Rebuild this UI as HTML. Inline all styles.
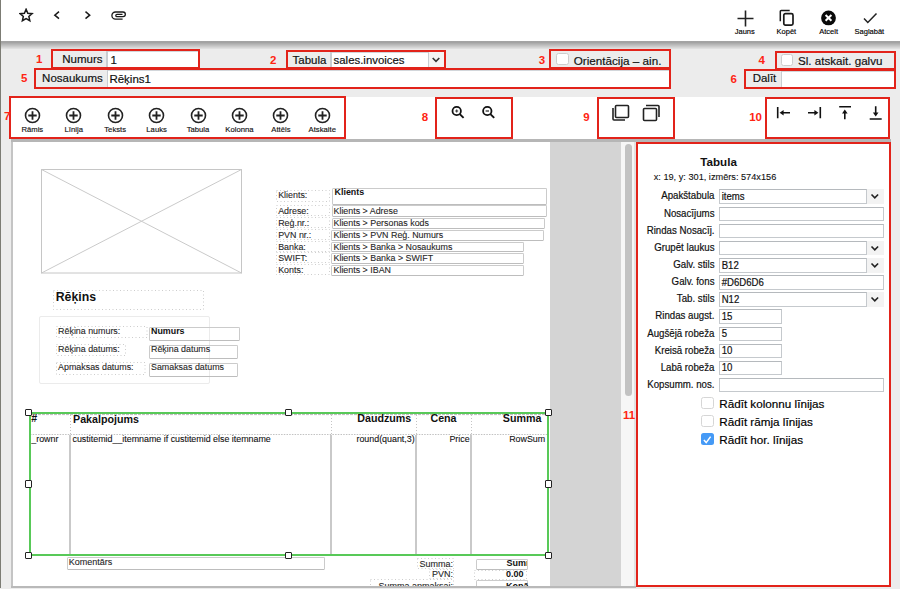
<!DOCTYPE html>
<html><head><meta charset="utf-8"><style>
html,body{margin:0;padding:0;}
body{width:900px;height:589px;overflow:hidden;position:relative;font-family:"Liberation Sans", sans-serif;background:#ececec}
body>div,body>svg{position:absolute}
body>div>div{position:absolute}
</style></head><body>
<div style="left:0px;top:0px;width:900px;height:589px;background:#ececec"></div>
<div style="left:1px;top:0px;width:899px;height:41px;background:#fff"></div>
<div style="left:1px;top:41px;width:899px;height:8px;background:linear-gradient(#a6a6a6 0%,#a0a0a0 15%,#d8d8d8 85%,#e4e4e4 100%)"></div>
<div style="left:0px;top:0px;width:1px;height:589px;background:#7c7c74"></div>
<svg style="position:absolute;left:19px;top:8px;" width="15" height="15" viewBox="0 0 15 15"><polygon points="7.10,1.30 8.80,5.25 13.09,5.65 9.86,8.50 10.80,12.70 7.10,10.50 3.40,12.70 4.34,8.50 1.11,5.65 5.40,5.25" fill="none" stroke="#1a1a1a" stroke-width="1.5" stroke-linejoin="miter"/></svg>
<svg style="position:absolute;left:52px;top:10px;" width="10" height="11" viewBox="0 0 10 11"><polyline points="7,1.7 2.8,5.2 7,8.7" fill="none" stroke="#1a1a1a" stroke-width="1.5"/></svg>
<svg style="position:absolute;left:83px;top:10px;" width="10" height="11" viewBox="0 0 10 11"><polyline points="2.5,1.7 6.7,5.2 2.5,8.7" fill="none" stroke="#1a1a1a" stroke-width="1.5"/></svg>
<svg style="position:absolute;left:110.7px;top:10px;" width="17" height="11" viewBox="0 0 17 11"><path d="M11.6,9.2 H4.5 A3.6,3.6 0 0 1 4.5,2 H12 A2.35,2.35 0 0 1 12,6.7 H6 A1.2,1.2 0 0 1 6,4.3 H11.5" fill="none" stroke="#1a1a1a" stroke-width="1.3"/></svg>
<svg style="position:absolute;left:736px;top:9px;" width="19" height="19" viewBox="0 0 19 19"><path d="M9.5,1.5 V17.5 M1.5,9.5 H17.5" stroke="#222" stroke-width="1.6" fill="none"/></svg>
<svg style="position:absolute;left:778px;top:8px;" width="18" height="19" viewBox="0 0 18 19"><path d="M2.3,13.3 V3.5 A1,1 0 0 1 3.3,2.5 H11.7" stroke="#1a1a1a" stroke-width="1.5" fill="none"/><rect x="5.8" y="5.7" width="9.2" height="11.4" rx="1.6" stroke="#1a1a1a" stroke-width="1.7" fill="none"/></svg>
<svg style="position:absolute;left:820px;top:10px;" width="17" height="17" viewBox="0 0 17 17"><circle cx="8.5" cy="7.9" r="7.4" fill="#0a0a0a"/><path d="M5.6,5.0 L11.4,10.8 M11.4,5.0 L5.6,10.8" stroke="#fff" stroke-width="2"/></svg>
<svg style="position:absolute;left:862px;top:11px;" width="16" height="14" viewBox="0 0 16 14"><polyline points="2,7.5 5.8,11.5 14.5,2.5" fill="none" stroke="#222" stroke-width="1.5"/></svg>
<div style="left:444.79999999999995px;width:600px;text-align:center;top:28.45px;font-size:7.5px;line-height:7.5px;font-weight:normal;color:#000;white-space:nowrap;-webkit-text-stroke:0.14px #000;">Jauns</div>
<div style="left:486.4px;width:600px;text-align:center;top:28.45px;font-size:7.5px;line-height:7.5px;font-weight:normal;color:#000;white-space:nowrap;-webkit-text-stroke:0.14px #000;">Kopēt</div>
<div style="left:528.6px;width:600px;text-align:center;top:28.45px;font-size:7.5px;line-height:7.5px;font-weight:normal;color:#000;white-space:nowrap;-webkit-text-stroke:0.14px #000;">Atcelt</div>
<div style="left:569.4px;width:600px;text-align:center;top:28.45px;font-size:7.5px;line-height:7.5px;font-weight:normal;color:#000;white-space:nowrap;-webkit-text-stroke:0.14px #000;">Saglabāt</div>
<div style="left:53.1px;top:50.9px;width:53.1px;height:16.5px;background:#ececec"></div>
<div style="left:106.2px;top:50.9px;width:1.5px;height:16.5px;background:#c9cdd1"></div>
<div style="left:107.7px;top:50.9px;width:90.0px;height:16.5px;background:#fff;border-top:1.5px solid #d2d6da;box-sizing:border-box"></div>
<div style="right:797.5px;top:54.27px;font-size:11.5px;line-height:11.5px;font-weight:normal;color:#111;white-space:nowrap;-webkit-text-stroke:0.18px #111;">Numurs</div>
<div style="left:110.5px;top:55.07px;font-size:11.5px;line-height:11.5px;font-weight:normal;color:#111;white-space:nowrap;-webkit-text-stroke:0.18px #111;">1</div>
<div style="left:51.1px;top:48.9px;width:148.6px;height:20.5px;border:2px solid #e2231a;box-sizing:border-box;"></div>
<div style="left:36px;top:70.3px;width:70.5px;height:17px;background:#ececec"></div>
<div style="left:106.5px;top:70.3px;width:1.5px;height:17px;background:#c9cdd1"></div>
<div style="left:108.0px;top:70.3px;width:561.0px;height:17px;background:#fff;border-top:1.5px solid #d2d6da;box-sizing:border-box"></div>
<div style="right:797.2px;top:72.87px;font-size:11.5px;line-height:11.5px;font-weight:normal;color:#111;white-space:nowrap;-webkit-text-stroke:0.18px #111;">Nosaukums</div>
<div style="left:109.4px;top:74.07px;font-size:11.5px;line-height:11.5px;font-weight:normal;color:#111;white-space:nowrap;-webkit-text-stroke:0.18px #111;">Rēķins1</div>
<div style="left:34px;top:68.3px;width:637px;height:21px;border:2px solid #e2231a;box-sizing:border-box;"></div>
<div style="left:287.7px;top:51.8px;width:42.3px;height:15.5px;background:#ececec"></div>
<div style="left:330.0px;top:51.8px;width:1.5px;height:15.5px;background:#c9cdd1"></div>
<div style="left:331.5px;top:51.8px;width:112.8px;height:15.5px;background:#fff;border-top:1.5px solid #d2d6da;box-sizing:border-box"></div>
<div style="left:427.6px;top:51.8px;width:16.7px;height:15.5px;background:#f4f4f4;border-left:1px solid #c9cdd1;box-sizing:border-box"></div>
<svg style="position:absolute;left:431px;top:55.5px;" width="10" height="8" viewBox="0 0 10 8"><polyline points="1.7,2 5,5.3 8.3,2" fill="none" stroke="#333" stroke-width="1.6"/></svg>
<div style="right:573.6px;top:54.67px;font-size:11.5px;line-height:11.5px;font-weight:normal;color:#111;white-space:nowrap;-webkit-text-stroke:0.18px #111;">Tabula</div>
<div style="left:333.6px;top:54.95px;font-size:11.4px;line-height:11.4px;font-weight:normal;color:#111;white-space:nowrap;-webkit-text-stroke:0.18px #111;">sales.invoices</div>
<div style="left:285.7px;top:49.8px;width:160.6px;height:19.5px;border:2px solid #e2231a;box-sizing:border-box;"></div>
<div style="left:556.4px;top:53.2px;width:12.2px;height:12.2px;background:#fff;border:1.2px solid #cdcdcd;border-radius:2.5px;box-sizing:border-box"></div>
<div style="left:573.7px;top:54.90px;font-size:11.7px;line-height:11.7px;font-weight:normal;color:#111;white-space:nowrap;-webkit-text-stroke:0.18px #111;">Orientācija – ain.</div>
<div style="left:549.1px;top:49.1px;width:121.7px;height:20px;border:2px solid #e2231a;box-sizing:border-box;"></div>
<div style="left:781.2px;top:53.5px;width:12.2px;height:12.2px;background:#fff;border:1.2px solid #cdcdcd;border-radius:2.5px;box-sizing:border-box"></div>
<div style="left:798px;top:54.78px;font-size:11.6px;line-height:11.6px;font-weight:normal;color:#111;white-space:nowrap;-webkit-text-stroke:0.18px #111;">Sl. atskait. galvu</div>
<div style="left:774.7px;top:50.7px;width:121.6px;height:19.1px;border:2px solid #e2231a;box-sizing:border-box;"></div>
<div style="left:746.3px;top:71.4px;width:34.3px;height:15.8px;background:#ececec"></div>
<div style="left:780.5999999999999px;top:71.4px;width:1.5px;height:15.8px;background:#c9cdd1"></div>
<div style="left:782.0999999999999px;top:71.4px;width:112.2px;height:15.8px;background:#fff;border-top:1.5px solid #d2d6da;box-sizing:border-box"></div>
<div style="right:123.70000000000005px;top:73.37px;font-size:11.5px;line-height:11.5px;font-weight:normal;color:#111;white-space:nowrap;-webkit-text-stroke:0.18px #111;">Dalīt</div>
<div style="left:744.3px;top:69.4px;width:152px;height:19.8px;border:2px solid #e2231a;box-sizing:border-box;"></div>
<div style="left:11px;top:97px;width:879px;height:42px;background:#fff"></div>
<div style="left:11px;top:139px;width:880px;height:3px;background:#b6b6b6"></div>
<svg style="position:absolute;left:23.799999999999997px;top:107px;" width="17" height="17" viewBox="0 0 17 17"><circle cx="8.5" cy="8.5" r="7" fill="none" stroke="#222" stroke-width="1.6"/><path d="M8.5,4.3 V12.7 M4.3,8.5 H12.7" stroke="#222" stroke-width="1.8"/></svg>
<div style="left:-267.7px;width:600px;text-align:center;top:125.88px;font-size:7.7px;line-height:7.7px;font-weight:normal;color:#111;white-space:nowrap;-webkit-text-stroke:0.14px #111;">Rāmis</div>
<svg style="position:absolute;left:65.22999999999999px;top:107px;" width="17" height="17" viewBox="0 0 17 17"><circle cx="8.5" cy="8.5" r="7" fill="none" stroke="#222" stroke-width="1.6"/><path d="M8.5,4.3 V12.7 M4.3,8.5 H12.7" stroke="#222" stroke-width="1.8"/></svg>
<div style="left:-226.27px;width:600px;text-align:center;top:125.88px;font-size:7.7px;line-height:7.7px;font-weight:normal;color:#111;white-space:nowrap;-webkit-text-stroke:0.14px #111;">Līnija</div>
<svg style="position:absolute;left:106.66px;top:107px;" width="17" height="17" viewBox="0 0 17 17"><circle cx="8.5" cy="8.5" r="7" fill="none" stroke="#222" stroke-width="1.6"/><path d="M8.5,4.3 V12.7 M4.3,8.5 H12.7" stroke="#222" stroke-width="1.8"/></svg>
<div style="left:-184.84px;width:600px;text-align:center;top:125.88px;font-size:7.7px;line-height:7.7px;font-weight:normal;color:#111;white-space:nowrap;-webkit-text-stroke:0.14px #111;">Teksts</div>
<svg style="position:absolute;left:148.08999999999997px;top:107px;" width="17" height="17" viewBox="0 0 17 17"><circle cx="8.5" cy="8.5" r="7" fill="none" stroke="#222" stroke-width="1.6"/><path d="M8.5,4.3 V12.7 M4.3,8.5 H12.7" stroke="#222" stroke-width="1.8"/></svg>
<div style="left:-143.41000000000003px;width:600px;text-align:center;top:125.88px;font-size:7.7px;line-height:7.7px;font-weight:normal;color:#111;white-space:nowrap;-webkit-text-stroke:0.14px #111;">Lauks</div>
<svg style="position:absolute;left:189.51999999999998px;top:107px;" width="17" height="17" viewBox="0 0 17 17"><circle cx="8.5" cy="8.5" r="7" fill="none" stroke="#222" stroke-width="1.6"/><path d="M8.5,4.3 V12.7 M4.3,8.5 H12.7" stroke="#222" stroke-width="1.8"/></svg>
<div style="left:-101.98000000000002px;width:600px;text-align:center;top:125.88px;font-size:7.7px;line-height:7.7px;font-weight:normal;color:#111;white-space:nowrap;-webkit-text-stroke:0.14px #111;">Tabula</div>
<svg style="position:absolute;left:230.95px;top:107px;" width="17" height="17" viewBox="0 0 17 17"><circle cx="8.5" cy="8.5" r="7" fill="none" stroke="#222" stroke-width="1.6"/><path d="M8.5,4.3 V12.7 M4.3,8.5 H12.7" stroke="#222" stroke-width="1.8"/></svg>
<div style="left:-60.55000000000001px;width:600px;text-align:center;top:125.88px;font-size:7.7px;line-height:7.7px;font-weight:normal;color:#111;white-space:nowrap;-webkit-text-stroke:0.14px #111;">Kolonna</div>
<svg style="position:absolute;left:272.38px;top:107px;" width="17" height="17" viewBox="0 0 17 17"><circle cx="8.5" cy="8.5" r="7" fill="none" stroke="#222" stroke-width="1.6"/><path d="M8.5,4.3 V12.7 M4.3,8.5 H12.7" stroke="#222" stroke-width="1.8"/></svg>
<div style="left:-19.120000000000005px;width:600px;text-align:center;top:125.88px;font-size:7.7px;line-height:7.7px;font-weight:normal;color:#111;white-space:nowrap;-webkit-text-stroke:0.14px #111;">Attēls</div>
<svg style="position:absolute;left:313.81px;top:107px;" width="17" height="17" viewBox="0 0 17 17"><circle cx="8.5" cy="8.5" r="7" fill="none" stroke="#222" stroke-width="1.6"/><path d="M8.5,4.3 V12.7 M4.3,8.5 H12.7" stroke="#222" stroke-width="1.8"/></svg>
<div style="left:22.310000000000002px;width:600px;text-align:center;top:125.88px;font-size:7.7px;line-height:7.7px;font-weight:normal;color:#111;white-space:nowrap;-webkit-text-stroke:0.14px #111;">Atskaite</div>
<div style="left:9px;top:96px;width:337px;height:43px;border:2px solid #e2231a;box-sizing:border-box;"></div>
<svg style="position:absolute;left:450px;top:105px;" width="16" height="16" viewBox="0 0 16 16"><circle cx="6.7" cy="6" r="4.2" fill="none" stroke="#111" stroke-width="1.8"/><path d="M9.8,9.1 L13.6,12.9" stroke="#111" stroke-width="1.9"/><path d="M6.7,4.5 V7.5 M5.2,6 H8.2" stroke="#333" stroke-width="1.1"/></svg>
<svg style="position:absolute;left:481px;top:105px;" width="16" height="16" viewBox="0 0 16 16"><circle cx="6.3" cy="6" r="4.2" fill="none" stroke="#111" stroke-width="1.8"/><path d="M9.4,9.1 L13.2,12.9" stroke="#111" stroke-width="1.9"/><path d="M4.6,6 H8" stroke="#333" stroke-width="1.3"/></svg>
<div style="left:435.3px;top:97px;width:77.7px;height:42px;border:2px solid #e2231a;box-sizing:border-box;"></div>
<svg style="position:absolute;left:611px;top:103px;" width="20" height="20" viewBox="0 0 20 20"><rect x="4.5" y="2.5" width="13" height="12" rx="1" fill="none" stroke="#222" stroke-width="1.6"/><path d="M2,5 V16 A1,1 0 0 0 3,17 H14" fill="none" stroke="#222" stroke-width="1.6"/></svg>
<svg style="position:absolute;left:641px;top:103px;" width="20" height="20" viewBox="0 0 20 20"><rect x="2.5" y="5.5" width="13" height="12" rx="1" fill="none" stroke="#222" stroke-width="1.6"/><path d="M5,2.5 H17 A1,1 0 0 1 18,3.5 V14" fill="none" stroke="#222" stroke-width="1.6"/></svg>
<div style="left:596.8px;top:96.5px;width:77.9px;height:42.4px;border:2px solid #e2231a;box-sizing:border-box;"></div>
<svg style="position:absolute;left:775px;top:105px;" width="18" height="16" viewBox="0 0 18 16"><path d="M2.7,2 V13.3 M7,7.7 H15" stroke="#111" stroke-width="1.6" fill="none"/><polygon points="4.6,7.7 8.6,4.9 8.6,10.5" fill="#111"/></svg>
<svg style="position:absolute;left:806px;top:105px;" width="18" height="16" viewBox="0 0 18 16"><path d="M14.3,2 V13.3 M2,7.7 H10" stroke="#111" stroke-width="1.6" fill="none"/><polygon points="12.4,7.7 8.4,4.9 8.4,10.5" fill="#111"/></svg>
<svg style="position:absolute;left:837px;top:104px;" width="17" height="17" viewBox="0 0 17 17"><path d="M2.2,2.7 H14 M7.8,8 V15.3" stroke="#111" stroke-width="1.6" fill="none"/><polygon points="7.8,5.6 5,9.6 10.6,9.6" fill="#111"/></svg>
<svg style="position:absolute;left:868px;top:104px;" width="17" height="17" viewBox="0 0 17 17"><path d="M1.7,15 H13.7 M7.7,2.3 V10" stroke="#111" stroke-width="1.6" fill="none"/><polygon points="7.7,12.4 4.9,8.4 10.5,8.4" fill="#111"/></svg>
<div style="left:764.9px;top:97px;width:125px;height:42px;border:2px solid #e2231a;box-sizing:border-box;"></div>
<div style="left:11px;top:142px;width:625px;height:446px;background:#fff"></div>
<div style="left:11px;top:142px;width:2px;height:446px;background:#c4c4c4"></div>
<div style="left:550px;top:142px;width:71px;height:444px;background:#d4d4d4"></div>
<div style="left:621px;top:142px;width:13px;height:444px;background:#f6f6f6"></div>
<div style="left:634px;top:142px;width:2px;height:444px;background:#e2e2e2"></div>
<div style="left:625px;top:144px;width:7px;height:252px;background:#c2c2c2;border-radius:3.5px"></div>
<div style="left:11px;top:586px;width:625px;height:2px;background:#b9b9b9"></div>
<svg style="position:absolute;left:41px;top:169px;" width="201" height="105" viewBox="0 0 201 105"><rect x="0.5" y="0.5" width="200" height="103.5" fill="none" stroke="#c6c6c6" stroke-width="1"/><path d="M0.5,0.5 L200.5,104 M200.5,0.5 L0.5,104" stroke="#cacaca" stroke-width="1"/></svg>
<svg style="position:absolute;left:276px;top:190px" width="55" height="13"><rect x="0.5" y="0.5" width="53" height="11" fill="none" stroke="#cdcdcd" stroke-width="1" stroke-dasharray="1 2.5"/></svg>
<svg style="position:absolute;left:276px;top:205px" width="55" height="12"><rect x="0.5" y="0.5" width="53" height="10" fill="none" stroke="#cdcdcd" stroke-width="1" stroke-dasharray="1 2.5"/></svg>
<svg style="position:absolute;left:276px;top:217px" width="55" height="12"><rect x="0.5" y="0.5" width="53" height="10" fill="none" stroke="#cdcdcd" stroke-width="1" stroke-dasharray="1 2.5"/></svg>
<svg style="position:absolute;left:276px;top:229px" width="55" height="12"><rect x="0.5" y="0.5" width="53" height="10" fill="none" stroke="#cdcdcd" stroke-width="1" stroke-dasharray="1 2.5"/></svg>
<svg style="position:absolute;left:276px;top:241px" width="55" height="12"><rect x="0.5" y="0.5" width="53" height="10" fill="none" stroke="#cdcdcd" stroke-width="1" stroke-dasharray="1 2.5"/></svg>
<svg style="position:absolute;left:276px;top:252px" width="55" height="12"><rect x="0.5" y="0.5" width="53" height="10" fill="none" stroke="#cdcdcd" stroke-width="1" stroke-dasharray="1 2.5"/></svg>
<svg style="position:absolute;left:276px;top:264px" width="55" height="12"><rect x="0.5" y="0.5" width="53" height="10" fill="none" stroke="#cdcdcd" stroke-width="1" stroke-dasharray="1 2.5"/></svg>
<div style="left:331.5px;top:188px;width:215.5px;height:17px;border:1px solid #cbcbcb;border-bottom-color:#bdbdbd;box-sizing:border-box;border-radius:1.5px"></div>
<div style="left:278.2px;top:191.07px;font-size:8.9px;line-height:8.9px;font-weight:normal;color:#262626;white-space:nowrap;-webkit-text-stroke:0.1px #262626;">Klients:</div>
<div style="left:331.5px;top:205px;width:215.5px;height:11.5px;border:1px solid #cbcbcb;border-bottom-color:#bdbdbd;box-sizing:border-box;border-radius:1.5px"></div>
<div style="left:278.2px;top:207.27px;font-size:8.9px;line-height:8.9px;font-weight:normal;color:#262626;white-space:nowrap;-webkit-text-stroke:0.1px #262626;">Adrese:</div>
<div style="left:331.5px;top:218px;width:213.5px;height:10.5px;border:1px solid #cbcbcb;border-bottom-color:#bdbdbd;box-sizing:border-box;border-radius:1.5px"></div>
<div style="left:278.2px;top:219.07px;font-size:8.9px;line-height:8.9px;font-weight:normal;color:#262626;white-space:nowrap;-webkit-text-stroke:0.1px #262626;">Reģ.nr.:</div>
<div style="left:331px;top:229.5px;width:213px;height:11px;border:1px solid #cbcbcb;border-bottom-color:#bdbdbd;box-sizing:border-box;border-radius:1.5px"></div>
<div style="left:278.2px;top:230.97px;font-size:8.9px;line-height:8.9px;font-weight:normal;color:#262626;white-space:nowrap;-webkit-text-stroke:0.1px #262626;">PVN nr.:</div>
<div style="left:331px;top:241.5px;width:193px;height:10px;border:1px solid #cbcbcb;border-bottom-color:#bdbdbd;box-sizing:border-box;border-radius:1.5px"></div>
<div style="left:278.2px;top:242.57px;font-size:8.9px;line-height:8.9px;font-weight:normal;color:#262626;white-space:nowrap;-webkit-text-stroke:0.1px #262626;">Banka:</div>
<div style="left:331px;top:253px;width:193px;height:10.5px;border:1px solid #cbcbcb;border-bottom-color:#bdbdbd;box-sizing:border-box;border-radius:1.5px"></div>
<div style="left:278.2px;top:254.27px;font-size:8.9px;line-height:8.9px;font-weight:normal;color:#262626;white-space:nowrap;-webkit-text-stroke:0.1px #262626;">SWIFT:</div>
<div style="left:331px;top:264.5px;width:193px;height:11.5px;border:1px solid #cbcbcb;border-bottom-color:#bdbdbd;box-sizing:border-box;border-radius:1.5px"></div>
<div style="left:278.2px;top:265.77px;font-size:8.9px;line-height:8.9px;font-weight:normal;color:#262626;white-space:nowrap;-webkit-text-stroke:0.1px #262626;">Konts:</div>
<div style="left:334.6px;top:188.47px;font-size:8.9px;line-height:8.9px;font-weight:bold;color:#111;white-space:nowrap;">Klients</div>
<div style="left:333.5px;top:207.27px;font-size:8.9px;line-height:8.9px;font-weight:normal;color:#262626;white-space:nowrap;-webkit-text-stroke:0.1px #262626;">Klients &gt; Adrese</div>
<div style="left:333.5px;top:219.07px;font-size:8.9px;line-height:8.9px;font-weight:normal;color:#262626;white-space:nowrap;-webkit-text-stroke:0.1px #262626;">Klients &gt; Personas kods</div>
<div style="left:333.5px;top:230.97px;font-size:8.9px;line-height:8.9px;font-weight:normal;color:#262626;white-space:nowrap;-webkit-text-stroke:0.1px #262626;">Klients &gt; PVN Reģ. Numurs</div>
<div style="left:333.5px;top:242.57px;font-size:8.9px;line-height:8.9px;font-weight:normal;color:#262626;white-space:nowrap;-webkit-text-stroke:0.1px #262626;">Klients &gt; Banka &gt; Nosaukums</div>
<div style="left:333.5px;top:254.27px;font-size:8.9px;line-height:8.9px;font-weight:normal;color:#262626;white-space:nowrap;-webkit-text-stroke:0.1px #262626;">Klients &gt; Banka &gt; SWIFT</div>
<div style="left:333.5px;top:265.77px;font-size:8.9px;line-height:8.9px;font-weight:normal;color:#262626;white-space:nowrap;-webkit-text-stroke:0.1px #262626;">Klients &gt; IBAN</div>
<svg style="position:absolute;left:53px;top:290px" width="152" height="21"><rect x="0.5" y="0.5" width="150" height="19" fill="none" stroke="#cdcdcd" stroke-width="1" stroke-dasharray="1 2.5"/></svg>
<div style="left:55.7px;top:290.69px;font-size:12.3px;line-height:12.3px;font-weight:bold;color:#111;white-space:nowrap;">Rēķins</div>
<div style="left:38.5px;top:316px;width:171px;height:67.5px;border:1px solid #ebebeb;box-sizing:border-box;border-radius:2px"></div>
<svg style="position:absolute;left:55.5px;top:326px" width="92.5" height="13"><rect x="0.5" y="0.5" width="90.5" height="11" fill="none" stroke="#cdcdcd" stroke-width="1" stroke-dasharray="1 2.5"/></svg>
<svg style="position:absolute;left:55.5px;top:344px" width="71" height="13"><rect x="0.5" y="0.5" width="69" height="11" fill="none" stroke="#cdcdcd" stroke-width="1" stroke-dasharray="1 2.5"/></svg>
<svg style="position:absolute;left:55.5px;top:362px" width="90.5" height="14"><rect x="0.5" y="0.5" width="88.5" height="12" fill="none" stroke="#cdcdcd" stroke-width="1" stroke-dasharray="1 2.5"/></svg>
<div style="left:148.5px;top:326.5px;width:91.5px;height:14px;border:1px solid #cbcbcb;border-bottom-color:#bdbdbd;box-sizing:border-box;border-radius:1.5px"></div>
<div style="left:148.5px;top:344.5px;width:89.5px;height:14px;border:1px solid #cbcbcb;border-bottom-color:#bdbdbd;box-sizing:border-box;border-radius:1.5px"></div>
<div style="left:148.5px;top:362.5px;width:89.5px;height:14px;border:1px solid #cbcbcb;border-bottom-color:#bdbdbd;box-sizing:border-box;border-radius:1.5px"></div>
<div style="left:58.1px;top:327.27px;font-size:8.9px;line-height:8.9px;font-weight:normal;color:#262626;white-space:nowrap;-webkit-text-stroke:0.1px #262626;">Rēķina numurs:</div>
<div style="left:58.1px;top:345.37px;font-size:8.9px;line-height:8.9px;font-weight:normal;color:#262626;white-space:nowrap;-webkit-text-stroke:0.1px #262626;">Rēķina datums:</div>
<div style="left:58.1px;top:362.97px;font-size:8.9px;line-height:8.9px;font-weight:normal;color:#262626;white-space:nowrap;-webkit-text-stroke:0.1px #262626;">Apmaksas datums:</div>
<div style="left:151px;top:327.07px;font-size:8.9px;line-height:8.9px;font-weight:bold;color:#111;white-space:nowrap;">Numurs</div>
<div style="left:151px;top:345.07px;font-size:8.9px;line-height:8.9px;font-weight:normal;color:#262626;white-space:nowrap;-webkit-text-stroke:0.1px #262626;">Rēķina datums</div>
<div style="left:151px;top:363.27px;font-size:8.9px;line-height:8.9px;font-weight:normal;color:#262626;white-space:nowrap;-webkit-text-stroke:0.1px #262626;">Samaksas datums</div>
<svg style="position:absolute;left:0;top:0" width="560" height="560"><path d="M30,434.5 H548" stroke="#c2c2c2" stroke-width="1" stroke-dasharray="1.5 1.2"/><path d="M30,414.6 H548" stroke="#bdb8bd" stroke-width="1" stroke-dasharray="3 1"/><path d="M70.5,415 V434" stroke="#c4c4c4" stroke-width="1" stroke-dasharray="1 2"/><path d="M331.5,415 V434" stroke="#c4c4c4" stroke-width="1" stroke-dasharray="1 2"/><path d="M416.5,415 V434" stroke="#c4c4c4" stroke-width="1" stroke-dasharray="1 2"/><path d="M471.5,415 V434" stroke="#c4c4c4" stroke-width="1" stroke-dasharray="1 2"/></svg>
<div style="left:69.4px;top:434.5px;width:2px;height:120px;background:#c9c9c9"></div>
<div style="left:330.4px;top:434.5px;width:2px;height:120px;background:#c9c9c9"></div>
<div style="left:415.4px;top:434.5px;width:2px;height:120px;background:#c9c9c9"></div>
<div style="left:470.4px;top:434.5px;width:2px;height:120px;background:#c9c9c9"></div>
<div style="left:31.3px;top:413.44px;font-size:10.7px;line-height:10.7px;font-weight:bold;color:#111;white-space:nowrap;">#</div>
<div style="left:73px;top:413.54px;font-size:10.7px;line-height:10.7px;font-weight:bold;color:#111;white-space:nowrap;">Pakalpojums</div>
<div style="right:488.7px;top:413.34px;font-size:10.7px;line-height:10.7px;font-weight:bold;color:#111;white-space:nowrap;">Daudzums</div>
<div style="left:143.5px;width:600px;text-align:center;top:413.34px;font-size:10.7px;line-height:10.7px;font-weight:bold;color:#111;white-space:nowrap;">Cena</div>
<div style="right:358.6px;top:413.34px;font-size:10.7px;line-height:10.7px;font-weight:bold;color:#111;white-space:nowrap;">Summa</div>
<div style="left:31.3px;top:434.97px;font-size:8.9px;line-height:8.9px;font-weight:normal;color:#111;white-space:nowrap;-webkit-text-stroke:0.1px #111;">_rownr</div>
<div style="left:72.5px;top:434.97px;font-size:8.9px;line-height:8.9px;font-weight:normal;color:#111;white-space:nowrap;-webkit-text-stroke:0.1px #111;">custitemid__itemname if custitemid else itemname</div>
<div style="right:485.3px;top:434.97px;font-size:8.9px;line-height:8.9px;font-weight:normal;color:#111;white-space:nowrap;-webkit-text-stroke:0.1px #111;">round(quant,3)</div>
<div style="right:430.4px;top:434.97px;font-size:8.9px;line-height:8.9px;font-weight:normal;color:#111;white-space:nowrap;-webkit-text-stroke:0.1px #111;">Price</div>
<div style="right:354.79999999999995px;top:434.97px;font-size:8.9px;line-height:8.9px;font-weight:normal;color:#111;white-space:nowrap;-webkit-text-stroke:0.1px #111;">RowSum</div>
<div style="left:28.5px;top:412px;width:520px;height:2px;background:#58c958"></div>
<div style="left:28.5px;top:553.5px;width:520px;height:2px;background:#58c958"></div>
<div style="left:28.5px;top:412px;width:2px;height:143px;background:#58c958"></div>
<div style="left:547px;top:412px;width:2px;height:143px;background:#58c958"></div>
<div style="left:67px;top:557px;width:258px;height:12.5px;border:1px solid #cbcbcb;border-bottom-color:#bdbdbd;box-sizing:border-box;border-radius:1.5px"></div>
<div style="left:68.7px;top:558.18px;font-size:9px;line-height:9px;font-weight:normal;color:#262626;white-space:nowrap;-webkit-text-stroke:0.1px #262626;">Komentārs</div>
<svg style="position:absolute;left:417px;top:558px" width="38" height="12"><rect x="0.5" y="0.5" width="36" height="10" fill="none" stroke="#cdcdcd" stroke-width="1" stroke-dasharray="1 2.5"/></svg>
<svg style="position:absolute;left:429px;top:569px" width="26" height="11"><rect x="0.5" y="0.5" width="24" height="9" fill="none" stroke="#cdcdcd" stroke-width="1" stroke-dasharray="1 2.5"/></svg>
<svg style="position:absolute;left:370px;top:579px" width="85" height="11"><rect x="0.5" y="0.5" width="83" height="9" fill="none" stroke="#cdcdcd" stroke-width="1" stroke-dasharray="1 2.5"/></svg>
<div style="right:447px;top:559.58px;font-size:9px;line-height:9px;font-weight:normal;color:#262626;white-space:nowrap;-webkit-text-stroke:0.1px #262626;">Summa:</div>
<div style="right:447px;top:570.18px;font-size:9px;line-height:9px;font-weight:normal;color:#262626;white-space:nowrap;-webkit-text-stroke:0.1px #262626;">PVN:</div>
<div style="right:447px;top:581.68px;font-size:9px;line-height:9px;font-weight:normal;color:#262626;white-space:nowrap;-webkit-text-stroke:0.1px #262626;">Summa apmaksai:</div>
<div style="left:475.5px;top:559px;width:52px;height:11px;border:1px solid #cbcbcb;border-bottom-color:#bdbdbd;box-sizing:border-box;border-radius:1.5px;overflow:hidden"></div>
<svg style="position:absolute;left:474px;top:570px" width="54" height="11"><rect x="0.5" y="0.5" width="52" height="9" fill="none" stroke="#cdcdcd" stroke-width="1" stroke-dasharray="1 2.5"/></svg>
<div style="left:475.5px;top:580px;width:52px;height:12px;border:1px solid #cbcbcb;border-bottom-color:#bdbdbd;box-sizing:border-box;border-radius:1.5px"></div>
<div style="left:476px;top:559px;width:51px;height:11px;overflow:hidden"><div style="position:absolute;left:30.5px;top:-0.8px;font-size:9px;line-height:11px;font-weight:bold;color:#111;white-space:nowrap">Summa</div></div>
<div style="right:376.4px;top:570.38px;font-size:9px;line-height:9px;font-weight:bold;color:#111;white-space:nowrap;">0.00</div>
<div style="left:506px;top:581.98px;font-size:9px;line-height:9px;font-weight:bold;color:#111;white-space:nowrap;">Kopā</div>
<div style="left:24.8px;top:408.8px;width:7.5px;height:7.5px;background:#fff;border:1.2px solid #222;border-radius:1px;box-sizing:border-box"></div>
<div style="left:24.8px;top:480.2px;width:7.5px;height:7.5px;background:#fff;border:1.2px solid #222;border-radius:1px;box-sizing:border-box"></div>
<div style="left:24.8px;top:551.5px;width:7.5px;height:7.5px;background:#fff;border:1.2px solid #222;border-radius:1px;box-sizing:border-box"></div>
<div style="left:284.8px;top:408.8px;width:7.5px;height:7.5px;background:#fff;border:1.2px solid #222;border-radius:1px;box-sizing:border-box"></div>
<div style="left:284.8px;top:551.5px;width:7.5px;height:7.5px;background:#fff;border:1.2px solid #222;border-radius:1px;box-sizing:border-box"></div>
<div style="left:544.8px;top:408.8px;width:7.5px;height:7.5px;background:#fff;border:1.2px solid #222;border-radius:1px;box-sizing:border-box"></div>
<div style="left:544.8px;top:480.2px;width:7.5px;height:7.5px;background:#fff;border:1.2px solid #222;border-radius:1px;box-sizing:border-box"></div>
<div style="left:544.8px;top:551.5px;width:7.5px;height:7.5px;background:#fff;border:1.2px solid #222;border-radius:1px;box-sizing:border-box"></div>
<div style="left:11px;top:586px;width:625px;height:2px;background:#b9b9b9"></div>
<div style="left:0px;top:588px;width:900px;height:1px;background:#ececec"></div>
<div style="left:636px;top:142px;width:255px;height:445px;background:#fff"></div>
<div style="left:418.6px;width:600px;text-align:center;top:155.98px;font-size:11.6px;line-height:11.6px;font-weight:bold;color:#111;white-space:nowrap;">Tabula</div>
<div style="left:653.7px;top:172.71px;font-size:9.2px;line-height:9.2px;font-weight:normal;color:#111;white-space:nowrap;-webkit-text-stroke:0.1px #111;">x: 19, y: 301, izmērs: 574x156</div>
<div style="left:718.5px;top:189.0px;width:148.5px;height:14.5px;background:#fff;border:1px solid #c5c9cd;border-top-color:#b5b9bd;box-sizing:border-box"></div>
<div style="left:867px;top:189.0px;width:17px;height:14.5px;background:#f3f3f3"></div>
<svg style="position:absolute;left:870px;top:193.0px;" width="10" height="7" viewBox="0 0 10 7"><polyline points="1.5,1.5 4.8,4.8 8.1,1.5" fill="none" stroke="#222" stroke-width="1.6"/></svg>
<div style="right:185.5px;top:191.29px;font-size:9.7px;line-height:9.7px;font-weight:normal;color:#111;white-space:nowrap;-webkit-text-stroke:0.18px #111;transform:scaleY(1.1);transform-origin:0 80%">Apakštabula</div>
<div style="left:721.7px;top:191.67px;font-size:9.6px;line-height:9.6px;font-weight:normal;color:#111;white-space:nowrap;-webkit-text-stroke:0.18px #111;transform:scaleY(1.1);transform-origin:0 80%">items</div>
<div style="left:718.5px;top:206.5px;width:165.5px;height:14.5px;background:#fff;border:1px solid #c5c9cd;border-top-color:#b5b9bd;box-sizing:border-box"></div>
<div style="right:185.5px;top:208.79px;font-size:9.7px;line-height:9.7px;font-weight:normal;color:#111;white-space:nowrap;-webkit-text-stroke:0.18px #111;transform:scaleY(1.1);transform-origin:0 80%">Nosacījums</div>
<div style="left:718.5px;top:223.5px;width:165.5px;height:14.5px;background:#fff;border:1px solid #c5c9cd;border-top-color:#b5b9bd;box-sizing:border-box"></div>
<div style="right:185.5px;top:225.79px;font-size:9.7px;line-height:9.7px;font-weight:normal;color:#111;white-space:nowrap;-webkit-text-stroke:0.18px #111;transform:scaleY(1.1);transform-origin:0 80%">Rindas Nosacīj.</div>
<div style="left:718.5px;top:240.5px;width:148.5px;height:14.5px;background:#fff;border:1px solid #c5c9cd;border-top-color:#b5b9bd;box-sizing:border-box"></div>
<div style="left:867px;top:240.5px;width:17px;height:14.5px;background:#f3f3f3"></div>
<svg style="position:absolute;left:870px;top:244.5px;" width="10" height="7" viewBox="0 0 10 7"><polyline points="1.5,1.5 4.8,4.8 8.1,1.5" fill="none" stroke="#222" stroke-width="1.6"/></svg>
<div style="right:185.5px;top:242.79px;font-size:9.7px;line-height:9.7px;font-weight:normal;color:#111;white-space:nowrap;-webkit-text-stroke:0.18px #111;transform:scaleY(1.1);transform-origin:0 80%">Grupēt laukus</div>
<div style="left:718.5px;top:258.0px;width:148.5px;height:14.5px;background:#fff;border:1px solid #c5c9cd;border-top-color:#b5b9bd;box-sizing:border-box"></div>
<div style="left:867px;top:258.0px;width:17px;height:14.5px;background:#f3f3f3"></div>
<svg style="position:absolute;left:870px;top:262.0px;" width="10" height="7" viewBox="0 0 10 7"><polyline points="1.5,1.5 4.8,4.8 8.1,1.5" fill="none" stroke="#222" stroke-width="1.6"/></svg>
<div style="right:185.5px;top:260.29px;font-size:9.7px;line-height:9.7px;font-weight:normal;color:#111;white-space:nowrap;-webkit-text-stroke:0.18px #111;transform:scaleY(1.1);transform-origin:0 80%">Galv. stils</div>
<div style="left:721.7px;top:260.67px;font-size:9.6px;line-height:9.6px;font-weight:normal;color:#111;white-space:nowrap;-webkit-text-stroke:0.18px #111;transform:scaleY(1.1);transform-origin:0 80%">B12</div>
<div style="left:718.5px;top:275.0px;width:165.5px;height:14.5px;background:#fff;border:1px solid #c5c9cd;border-top-color:#b5b9bd;box-sizing:border-box"></div>
<div style="right:185.5px;top:277.29px;font-size:9.7px;line-height:9.7px;font-weight:normal;color:#111;white-space:nowrap;-webkit-text-stroke:0.18px #111;transform:scaleY(1.1);transform-origin:0 80%">Galv. fons</div>
<div style="left:721.7px;top:277.67px;font-size:9.6px;line-height:9.6px;font-weight:normal;color:#111;white-space:nowrap;-webkit-text-stroke:0.18px #111;transform:scaleY(1.1);transform-origin:0 80%">#D6D6D6</div>
<div style="left:718.5px;top:292.0px;width:148.5px;height:14.5px;background:#fff;border:1px solid #c5c9cd;border-top-color:#b5b9bd;box-sizing:border-box"></div>
<div style="left:867px;top:292.0px;width:17px;height:14.5px;background:#f3f3f3"></div>
<svg style="position:absolute;left:870px;top:296.0px;" width="10" height="7" viewBox="0 0 10 7"><polyline points="1.5,1.5 4.8,4.8 8.1,1.5" fill="none" stroke="#222" stroke-width="1.6"/></svg>
<div style="right:185.5px;top:294.29px;font-size:9.7px;line-height:9.7px;font-weight:normal;color:#111;white-space:nowrap;-webkit-text-stroke:0.18px #111;transform:scaleY(1.1);transform-origin:0 80%">Tab. stils</div>
<div style="left:721.7px;top:294.67px;font-size:9.6px;line-height:9.6px;font-weight:normal;color:#111;white-space:nowrap;-webkit-text-stroke:0.18px #111;transform:scaleY(1.1);transform-origin:0 80%">N12</div>
<div style="left:718.5px;top:309.0px;width:63.5px;height:14.5px;background:#fff;border:1px solid #c5c9cd;border-top-color:#b5b9bd;box-sizing:border-box"></div>
<div style="right:185.5px;top:311.29px;font-size:9.7px;line-height:9.7px;font-weight:normal;color:#111;white-space:nowrap;-webkit-text-stroke:0.18px #111;transform:scaleY(1.1);transform-origin:0 80%">Rindas augst.</div>
<div style="left:721.7px;top:311.67px;font-size:9.6px;line-height:9.6px;font-weight:normal;color:#111;white-space:nowrap;-webkit-text-stroke:0.18px #111;transform:scaleY(1.1);transform-origin:0 80%">15</div>
<div style="left:718.5px;top:326.5px;width:63.5px;height:14.5px;background:#fff;border:1px solid #c5c9cd;border-top-color:#b5b9bd;box-sizing:border-box"></div>
<div style="right:185.5px;top:328.79px;font-size:9.7px;line-height:9.7px;font-weight:normal;color:#111;white-space:nowrap;-webkit-text-stroke:0.18px #111;transform:scaleY(1.1);transform-origin:0 80%">Augšējā robeža</div>
<div style="left:721.7px;top:329.17px;font-size:9.6px;line-height:9.6px;font-weight:normal;color:#111;white-space:nowrap;-webkit-text-stroke:0.18px #111;transform:scaleY(1.1);transform-origin:0 80%">5</div>
<div style="left:718.5px;top:343.5px;width:63.5px;height:14.5px;background:#fff;border:1px solid #c5c9cd;border-top-color:#b5b9bd;box-sizing:border-box"></div>
<div style="right:185.5px;top:345.79px;font-size:9.7px;line-height:9.7px;font-weight:normal;color:#111;white-space:nowrap;-webkit-text-stroke:0.18px #111;transform:scaleY(1.1);transform-origin:0 80%">Kreisā robeža</div>
<div style="left:721.7px;top:346.17px;font-size:9.6px;line-height:9.6px;font-weight:normal;color:#111;white-space:nowrap;-webkit-text-stroke:0.18px #111;transform:scaleY(1.1);transform-origin:0 80%">10</div>
<div style="left:718.5px;top:360.5px;width:63.5px;height:14.5px;background:#fff;border:1px solid #c5c9cd;border-top-color:#b5b9bd;box-sizing:border-box"></div>
<div style="right:185.5px;top:362.79px;font-size:9.7px;line-height:9.7px;font-weight:normal;color:#111;white-space:nowrap;-webkit-text-stroke:0.18px #111;transform:scaleY(1.1);transform-origin:0 80%">Labā robeža</div>
<div style="left:721.7px;top:363.17px;font-size:9.6px;line-height:9.6px;font-weight:normal;color:#111;white-space:nowrap;-webkit-text-stroke:0.18px #111;transform:scaleY(1.1);transform-origin:0 80%">10</div>
<div style="left:718.5px;top:377.5px;width:165.5px;height:14.5px;background:#fff;border:1px solid #c5c9cd;border-top-color:#b5b9bd;box-sizing:border-box"></div>
<div style="right:185.5px;top:379.79px;font-size:9.7px;line-height:9.7px;font-weight:normal;color:#111;white-space:nowrap;-webkit-text-stroke:0.18px #111;transform:scaleY(1.1);transform-origin:0 80%">Kopsumm. nos.</div>
<div style="left:701.2px;top:396.5px;width:12.7px;height:12.7px;background:#fff;border:1.2px solid #d6d6d6;border-radius:2.5px;box-sizing:border-box"></div>
<div style="left:719.2px;top:397.90px;font-size:11.7px;line-height:11.7px;font-weight:normal;color:#000;white-space:nowrap;-webkit-text-stroke:0.18px #000;">Rādīt kolonnu līnijas</div>
<div style="left:701.2px;top:414.5px;width:12.7px;height:12.7px;background:#fff;border:1.2px solid #d6d6d6;border-radius:2.5px;box-sizing:border-box"></div>
<div style="left:719.2px;top:415.90px;font-size:11.7px;line-height:11.7px;font-weight:normal;color:#000;white-space:nowrap;-webkit-text-stroke:0.18px #000;">Rādīt rāmja līnijas</div>
<div style="left:701.2px;top:432.5px;width:12.7px;height:12.7px;background:#459af6;border-radius:2.5px"></div>
<svg style="position:absolute;left:701.2px;top:432.5px;" width="13" height="13" viewBox="0 0 13 13"><polyline points="2.9,7 5.2,9.6 9.6,3.6" fill="none" stroke="#fff" stroke-width="1.5"/></svg>
<div style="left:719.2px;top:433.90px;font-size:11.7px;line-height:11.7px;font-weight:normal;color:#000;white-space:nowrap;-webkit-text-stroke:0.18px #000;">Rādīt hor. līnijas</div>
<div style="left:636px;top:142px;width:255px;height:445px;border:2px solid #e2231a;box-sizing:border-box;"></div>
<div style="left:36px;top:54.07px;font-size:11.5px;line-height:11.5px;font-weight:bold;color:#ff2413;white-space:nowrap;">1</div>
<div style="left:270px;top:54.77px;font-size:11.5px;line-height:11.5px;font-weight:bold;color:#ff2413;white-space:nowrap;">2</div>
<div style="left:538.7px;top:54.77px;font-size:11.5px;line-height:11.5px;font-weight:bold;color:#ff2413;white-space:nowrap;">3</div>
<div style="left:758.6px;top:55.07px;font-size:11.5px;line-height:11.5px;font-weight:bold;color:#ff2413;white-space:nowrap;">4</div>
<div style="left:21.1px;top:73.07px;font-size:11.5px;line-height:11.5px;font-weight:bold;color:#ff2413;white-space:nowrap;">5</div>
<div style="left:730.4px;top:74.17px;font-size:11.5px;line-height:11.5px;font-weight:bold;color:#ff2413;white-space:nowrap;">6</div>
<div style="left:4px;top:111.47px;font-size:11.5px;line-height:11.5px;font-weight:bold;color:#ff2413;white-space:nowrap;">7</div>
<div style="left:421.7px;top:112.37px;font-size:11.5px;line-height:11.5px;font-weight:bold;color:#ff2413;white-space:nowrap;">8</div>
<div style="left:583.3px;top:112.37px;font-size:11.5px;line-height:11.5px;font-weight:bold;color:#ff2413;white-space:nowrap;">9</div>
<div style="left:749.2px;top:112.17px;font-size:11.5px;line-height:11.5px;font-weight:bold;color:#ff2413;white-space:nowrap;">10</div>
<div style="left:623px;top:410.37px;font-size:11.5px;line-height:11.5px;font-weight:bold;color:#ff2413;white-space:nowrap;">11</div>
</body></html>
